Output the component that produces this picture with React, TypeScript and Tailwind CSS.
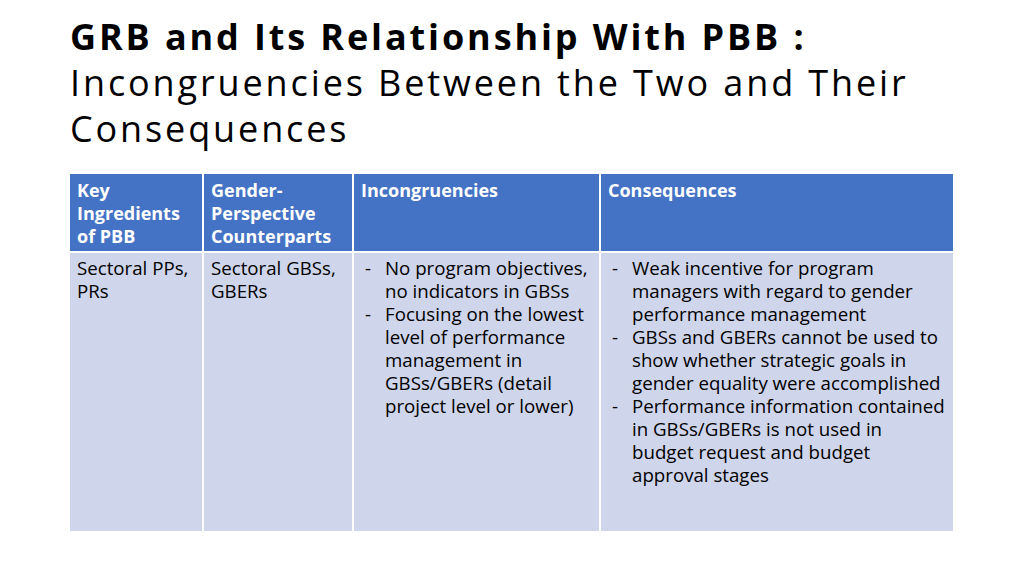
const rows = {
  incongruencies: [
    'No program objectives, no indicators in GBSs',
    'Focusing on the lowest level of performance management in GBSs/GBERs (detail project level or lower)',
  ],
  consequences: [
    'Weak incentive for program managers with regard to gender performance management',
    'GBSs and GBERs cannot be used to show whether strategic goals in gender equality were accomplished',
    'Performance information contained in GBSs/GBERs is not used in budget request and budget approval stages',
  ],
};

function DashList({ items }: { items: string[] }) {
  return (
    <ul>
      {items.map((t) => (
        <li key={t} className="flex">
          <span className="w-[24px] shrink-0 pl-[4px]">-</span>
          <span>{t}</span>
        </li>
      ))}
    </ul>
  );
}

export default function App() {
  return (
    <div
      className="w-[1024px] h-[576px] bg-white overflow-hidden text-black"
      style={{ fontFamily: '"Open Sans", "Noto Sans", sans-serif' }}
    >
      <div className="pl-[70px] pt-[14px] text-[36px] leading-[46px] tracking-[0.08em]">
        <div className="font-bold">GRB and Its Relationship With PBB :</div>
        <div>Incongruencies Between the Two and Their</div>
        <div>Consequences</div>
      </div>

      <div className="ml-[70px] mt-[22px] w-[883px] grid grid-cols-[132px_148px_245px_352px] grid-rows-[77px_278px] gap-[2px] bg-white">
        <div className="bg-[#4472c4] text-white font-bold text-[18px] leading-[23px] pl-[7px] pr-[4px] pt-[5px]">Key Ingredients of PBB</div>
        <div className="bg-[#4472c4] text-white font-bold text-[18px] leading-[23px] pl-[7px] pr-[4px] pt-[5px]">Gender-Perspective Counterparts</div>
        <div className="bg-[#4472c4] text-white font-bold text-[18px] leading-[23px] pl-[7px] pr-[4px] pt-[5px]">Incongruencies</div>
        <div className="bg-[#4472c4] text-white font-bold text-[18px] leading-[23px] pl-[7px] pr-[4px] pt-[5px]">Consequences</div>

        <div className="bg-[#cfd5ea] text-[18.7px] leading-[23px] pl-[7px] pr-[7px] pt-[3px]">Sectoral PPs, PRs</div>
        <div className="bg-[#cfd5ea] text-[18.7px] leading-[23px] pl-[7px] pr-[7px] pt-[3px]">Sectoral GBSs, GBERs</div>
        <div className="bg-[#cfd5ea] text-[18.7px] leading-[23px] pl-[7px] pr-[7px] pt-[3px]">
          <DashList items={rows.incongruencies} />
        </div>
        <div className="bg-[#cfd5ea] text-[18.7px] leading-[23px] pl-[7px] pr-[7px] pt-[3px]">
          <DashList items={rows.consequences} />
        </div>
      </div>
    </div>
  );
}
